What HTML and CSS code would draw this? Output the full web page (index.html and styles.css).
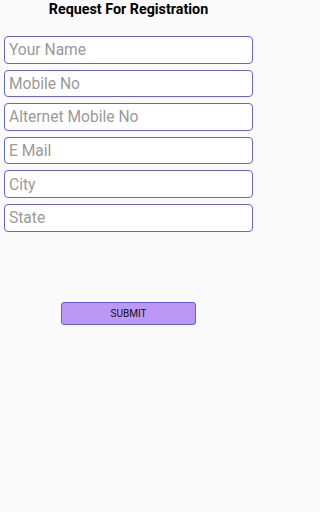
FILE: index.html
```html
<!DOCTYPE html>
<html>
<head>
<meta charset="utf-8">
<link rel="stylesheet" href="styles.css">
</head>
<body>
<div class="page">
  <h1 class="title">Request For Registration</h1>
  <form class="form">
    <input class="field" type="text" placeholder="Your Name">
    <input class="field" type="text" placeholder="Mobile No">
    <input class="field" type="text" placeholder="Alternet Mobile No">
    <input class="field" type="text" placeholder="E Mail">
    <input class="field" type="text" placeholder="City">
    <input class="field" type="text" placeholder="State">
    <div class="actions">
      <button class="submit" type="button">SUBMIT</button>
    </div>
  </form>
</div>
</body>
</html>
```
FILE: styles.css
```css
html, body {
  margin: 0;
  padding: 0;
  background: #fafafa;
  font-family: Roboto, "Noto Sans", sans-serif;
}
.page {
  width: 257px;
  height: 512px;
}
.title {
  margin: 0;
  height: 36px;
  font-size: 14.3px;
  font-weight: 700;
  line-height: 18px;
  text-align: center;
  color: #000;
}
.form {
  display: flex;
  flex-direction: column;
  gap: 6px;
  padding: 0 4px;
}
.field {
  box-sizing: border-box;
  height: 27.6px;
  width: 100%;
  margin: 0;
  padding: 1px 4px 0;
  border: 1.5px solid #6464dc;
  border-radius: 4px;
  background: #fff;
  font-family: Roboto, "Noto Sans", sans-serif;
  font-size: 15.6px;
  color: #000;
  outline: none;
}
.field::placeholder {
  color: #9a9a9a;
}
.actions {
  display: flex;
  justify-content: center;
  padding-top: 64px;
}
.submit {
  box-sizing: border-box;
  width: 135px;
  height: 23.5px;
  border: 1.5px solid #6a5ad8;
  border-radius: 3px;
  background: #bb98f4;
  font-family: Roboto, "Noto Sans", sans-serif;
  font-size: 10px;
  color: #111;
  padding: 0;
}
```
